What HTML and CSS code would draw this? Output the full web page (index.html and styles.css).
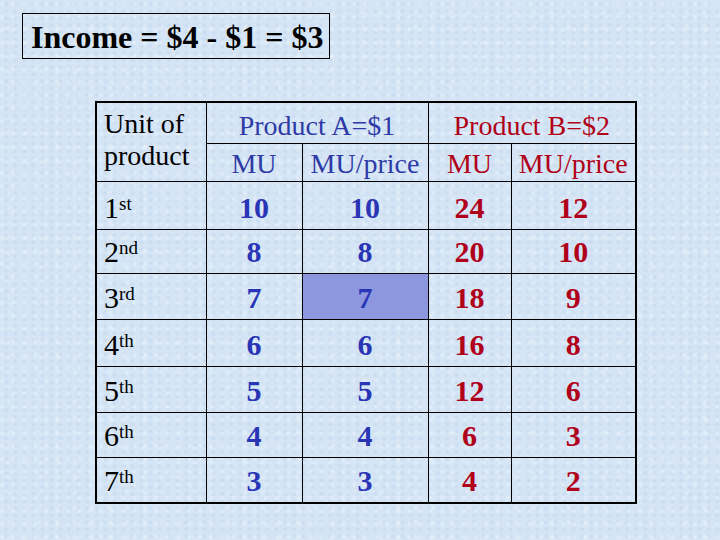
FILE: index.html
```html
<!DOCTYPE html>
<html>
<head>
<meta charset="utf-8">
<link rel="stylesheet" href="styles.css">
</head>
<body>
<div class="slide">
  <div class="title">Income = $4 - $1 = $3</div>
  <table class="mu-table">
    <colgroup>
      <col class="c-unit"><col class="c-amu"><col class="c-amp"><col class="c-bmu"><col class="c-bmp">
    </colgroup>
    <tr class="h1">
      <td class="unit-head" rowspan="2">Unit of<br>product</td>
      <td class="head-a" colspan="2">Product A=$1</td>
      <td class="head-b" colspan="2">Product B=$2</td>
    </tr>
    <tr class="h2">
      <td class="head-a">MU</td><td class="head-a">MU/price</td>
      <td class="head-b">MU</td><td class="head-b">MU/price</td>
    </tr>
    <tr class="r1"><td class="unit">1<sup>st</sup></td><td class="a">10</td><td class="a">10</td><td class="b">24</td><td class="b">12</td></tr>
    <tr class="r2"><td class="unit">2<sup>nd</sup></td><td class="a">8</td><td class="a">8</td><td class="b">20</td><td class="b">10</td></tr>
    <tr class="r3"><td class="unit">3<sup>rd</sup></td><td class="a">7</td><td class="a hl">7</td><td class="b">18</td><td class="b">9</td></tr>
    <tr class="r4"><td class="unit">4<sup>th</sup></td><td class="a">6</td><td class="a">6</td><td class="b">16</td><td class="b">8</td></tr>
    <tr class="r5"><td class="unit">5<sup>th</sup></td><td class="a">5</td><td class="a">5</td><td class="b">12</td><td class="b">6</td></tr>
    <tr class="r6"><td class="unit">6<sup>th</sup></td><td class="a">4</td><td class="a">4</td><td class="b">6</td><td class="b">3</td></tr>
    <tr class="r7"><td class="unit">7<sup>th</sup></td><td class="a">3</td><td class="a">3</td><td class="b">4</td><td class="b">2</td></tr>
  </table>
</div>
</body>
</html>
```

FILE: styles.css
```css
html, body {
  margin: 0;
  padding: 0;
}
body {
  width: 720px;
  height: 540px;
  overflow: hidden;
  background-color: #d5e5f5;
  background-image:
    radial-gradient(circle at 20% 30%, rgba(236,244,252,0.7) 0, rgba(236,244,252,0) 3px),
    radial-gradient(circle at 70% 60%, rgba(190,212,236,0.6) 0, rgba(190,212,236,0) 3px),
    radial-gradient(circle at 45% 85%, rgba(232,241,251,0.6) 0, rgba(232,241,251,0) 4px);
  background-size: 11px 13px, 9px 7px, 17px 15px;
  font-family: "Liberation Serif", "Times New Roman", serif;
}
.slide {
  padding: 13px 0 0 22px;
  font-family: "Liberation Serif", "Times New Roman", serif;
}
.title {
  display: inline-block;
  width: 306px;
  height: 44px;
  border: 1px solid #000;
  box-sizing: content-box;
  font-family: "Liberation Serif", "Times New Roman", serif;
  font-weight: bold;
  font-size: 32px;
  line-height: 47px;
  text-indent: 8px;
  color: #000;
  white-space: nowrap;
}
.mu-table {
  margin: 42px 0 0 73px;
  border-collapse: collapse;
  table-layout: fixed;
  width: 540px;
  border: 2px solid #000;
  font-family: "Liberation Serif", "Times New Roman", serif;
}
.c-unit { width: 110px; }
.c-amu { width: 96px; }
.c-amp { width: 126px; }
.c-bmu { width: 83px; }
.c-bmp { width: 125px; }
.mu-table td {
  border: 1px solid #000;
  padding: 0 0 5px 0;
  font-family: "Liberation Serif", "Times New Roman", serif;
  font-size: 30px;
  line-height: 32px;
  text-align: center;
  vertical-align: bottom;
  white-space: nowrap;
}
.mu-table .unit-head {
  text-align: left;
  vertical-align: top;
  padding: 5px 0 0 7px;
  color: #000;
  font-size: 28px;
  line-height: 32px;
}
.mu-table .unit {
  text-align: left;
  padding-left: 7px;
  color: #000;
}
.mu-table .unit sup {
  font-size: 19px;
  line-height: 0;
  vertical-align: 0.42em;
}
.h1 { height: 41px; }
.h2 { height: 38px; }
.r1 { height: 48px; }
.r2 { height: 44px; }
.r3 { height: 46px; }
.r4 { height: 47px; }
.r5 { height: 46px; }
.r6 { height: 45px; }
.r7 { height: 46px; }
.mu-table .head-a {
  color: #2e3aa6;
  font-size: 28px;
  padding-bottom: 1px;
}
.mu-table .head-b {
  color: #b00018;
  font-size: 28px;
  padding-bottom: 1px;
}
.mu-table .a {
  color: #2a35b5;
  font-weight: bold;
}
.mu-table .b {
  color: #b0001a;
  font-weight: bold;
}
.mu-table .hl {
  background: #8c97e0;
}
```
